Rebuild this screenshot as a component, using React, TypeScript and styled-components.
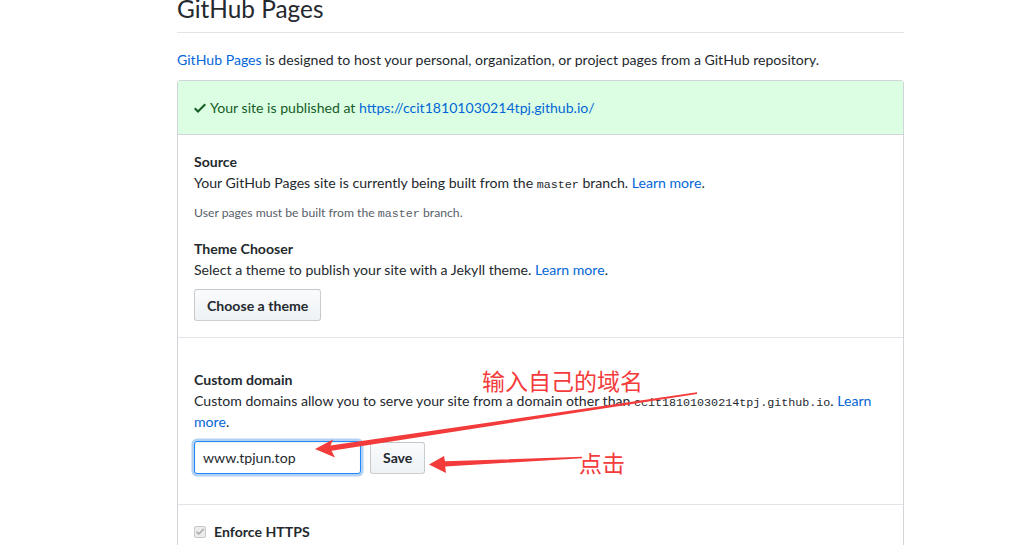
import styled, { createGlobalStyle } from 'styled-components';

const GlobalStyle = createGlobalStyle`
  html, body {
    margin: 0;
    padding: 0;
    background: #fff;
  }
  body {
    font-family: Lato, 'Noto Sans', 'Liberation Sans', sans-serif;
    font-size: 14.1px;
    line-height: 21px;
    color: #24292e;
  }
`;

const CheckIcon = ({ color, size }: { color: string; size: number }) => (
  <svg width={(size * 12) / 16} height={size} viewBox="0 0 12 16" fill={color}>
    <path d="M12 5l-8 8-4-4 1.5-1.5L4 10l6.5-6.5L12 5z" />
  </svg>
);

// red arrows + chinese notes drawn over the screenshot
const Annotations = () => (
  <>
    <StyledArrows width="1012" height="545" viewBox="0 0 1012 545">
      <polygon
        fill="#f43b3b"
        points="315,449 333,439.5 330.5,445.5 697,392.3 697,394 331.5,450.8 335,457.5"
      />
      <polygon
        fill="#f43b3b"
        points="429,464.5 444,456 445,461.3 582,456.8 582,458.3 445.2,466.5 446,473"
      />
    </StyledArrows>
    <StyledNote left={482} top={366}>
      输入自己的域名
    </StyledNote>
    <StyledNote left={579} top={448}>
      点击
    </StyledNote>
  </>
);

export default function App() {
  return (
    <StyledRoot>
      <GlobalStyle />
      <StyledPage>
        <StyledHeading>GitHub Pages</StyledHeading>
        <StyledIntro>
          <StyledLink>GitHub Pages</StyledLink> is designed to host your personal,
          organization, or project pages from a GitHub repository.
        </StyledIntro>

        <StyledBox>
          <StyledFlash>
            <CheckIcon color="#165c26" size={16} />
            <span>
              Your site is published at{' '}
              <StyledLink>https://ccit18101030214tpj.github.io/</StyledLink>
            </span>
          </StyledFlash>

          <StyledSection>
            <StyledTitle>Source</StyledTitle>
            <StyledText>
              Your GitHub Pages site is currently being built from the{' '}
              <StyledCode>master</StyledCode> branch.{' '}
              <StyledLink>Learn more</StyledLink>.
            </StyledText>
            <StyledNoteText>
              User pages must be built from the <StyledCode>master</StyledCode>{' '}
              branch.
            </StyledNoteText>

            <StyledTitle spaced>Theme Chooser</StyledTitle>
            <StyledText>
              Select a theme to publish your site with a Jekyll theme.{' '}
              <StyledLink>Learn more</StyledLink>.
            </StyledText>
            <StyledButton>Choose a theme</StyledButton>
          </StyledSection>

          <StyledSection top={31} bottom={30}>
            <StyledTitle>Custom domain</StyledTitle>
            <StyledText>
              Custom domains allow you to serve your site from a domain other than{' '}
              <StyledCode>ccit18101030214tpj.github.io</StyledCode>.{' '}
              <StyledLink>Learn more</StyledLink>.
            </StyledText>
            <StyledForm>
              <StyledInput readOnly value="www.tpjun.top" />
              <StyledButton as="span">Save</StyledButton>
            </StyledForm>
          </StyledSection>

          <StyledSection>
            <StyledCheckRow>
              <StyledCheckbox>
                <CheckIcon color="#a8a8a8" size={11} />
              </StyledCheckbox>
              <StyledTitle>Enforce HTTPS</StyledTitle>
            </StyledCheckRow>
          </StyledSection>
        </StyledBox>
      </StyledPage>
      <Annotations />
    </StyledRoot>
  );
}

const StyledRoot = styled.div`
  position: relative;
  width: 1012px;
  height: 545px;
  overflow: hidden;
`;

const StyledPage = styled.div`
  width: 727px;
  margin-left: 177px;
`;

const StyledHeading = styled.h2`
  margin: -6px 0 0;
  padding-bottom: 8px;
  font-size: 24.4px;
  font-weight: 400;
  line-height: 30px;
  border-bottom: 1px solid #e1e4e8;
`;

const StyledIntro = styled.p`
  margin: 16px 0 10px;
`;

const StyledLink = styled.a`
  color: #0366d6;
  text-decoration: none;
`;

const StyledBox = styled.div`
  border: 1px solid #d1d5da;
  border-radius: 3px;
`;

const StyledFlash = styled.div`
  display: flex;
  align-items: center;
  gap: 4px;
  padding: 16px;
  background: #dcffe4;
  color: #165c26;
  border-bottom: 1px solid #d1d5da;
`;

interface StyledSectionProps {
  top?: number;
  bottom?: number;
}

const StyledSection = styled.div<StyledSectionProps>`
  padding: ${({ top }) => top ?? 16}px 16px ${({ bottom }) => bottom ?? 16}px;
  & + & {
    border-top: 1px solid #e1e4e8;
  }
`;

const StyledTitle = styled.div<{ spaced?: boolean }>`
  font-weight: 700;
  margin-top: ${({ spaced }) => (spaced ? '16px' : '0')};
`;

const StyledText = styled.div``;

const StyledNoteText = styled.div`
  margin-top: 11px;
  font-size: 12.2px;
  line-height: 18px;
  color: #586069;
`;

const StyledCode = styled.code`
  font-family: 'Liberation Mono', 'DejaVu Sans Mono', monospace;
  font-size: 11.7px;
  line-height: 1;
`;

const StyledButton = styled.button`
  display: inline-flex;
  align-items: center;
  box-sizing: border-box;
  height: 32px;
  margin-top: 9px;
  padding: 0 12px;
  font-family: inherit;
  font-size: 14.1px;
  font-weight: 700;
  color: #24292e;
  background: linear-gradient(-180deg, #fafbfc 0%, #eff3f6 90%);
  border: 1px solid rgba(27, 31, 35, 0.2);
  border-radius: 3px;
`;

const StyledForm = styled.div`
  display: flex;
  align-items: center;
  gap: 9px;
  margin-top: 9px;

  ${StyledButton} {
    margin-top: 0;
  }
`;

const StyledInput = styled.input`
  box-sizing: border-box;
  width: 167px;
  height: 33px;
  padding: 0 8px;
  font-family: inherit;
  font-size: 14.1px;
  color: #24292e;
  border: 1px solid #2188ff;
  border-radius: 3px;
  outline: none;
  box-shadow: inset 0 1px 2px rgba(27, 31, 35, 0.075),
    0 0 0 2.5px rgba(3, 102, 214, 0.3);
`;

const StyledCheckRow = styled.div`
  display: flex;
  align-items: center;
  gap: 8px;
`;

const StyledCheckbox = styled.span`
  display: inline-flex;
  align-items: center;
  justify-content: center;
  box-sizing: border-box;
  width: 12px;
  height: 12px;
  background: #ececec;
  border: 1px solid #c9c9c9;
  border-radius: 2px;
`;

const StyledArrows = styled.svg`
  position: absolute;
  left: 0;
  top: 0;
  pointer-events: none;
`;

const StyledNote = styled.div<{ left: number; top: number }>`
  position: absolute;
  left: ${({ left }) => left}px;
  top: ${({ top }) => top}px;
  font-family: 'Noto Sans CJK SC', sans-serif;
  font-size: 23px;
  line-height: 28px;
  color: #f43b3b;
  white-space: nowrap;
`;
